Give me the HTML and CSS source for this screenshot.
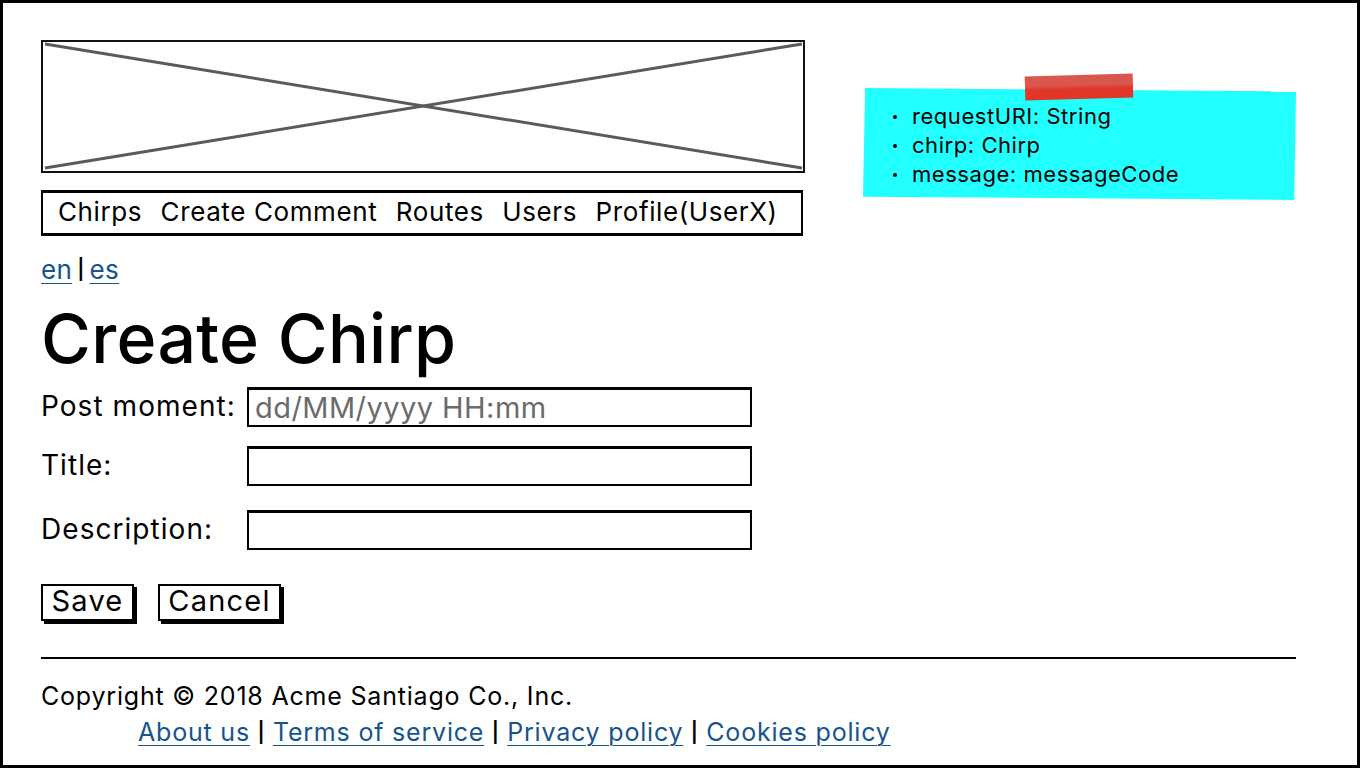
FILE: index.html

```html
<!DOCTYPE html>
<html lang="en">
<head>
  <meta charset="UTF-8" />
  <title>Create Chirp</title>
  <link rel="stylesheet" href="styles.css">
</head>
<body>

<div class="frame">
  <div class="top">
    <div class="header">
      <div class="banner">
        <svg class="banner-x" viewBox="0 0 760 129" preserveAspectRatio="none">
          <line x1="2" y1="2" x2="759" y2="126" />
          <line x1="2" y1="126" x2="759" y2="2" />
        </svg>
      </div>
      <nav class="menu">
        <a>Chirps</a>
        <a>Create Comment</a>
        <a>Routes</a>
        <a>Users</a>
        <a>Profile(UserX)</a>
      </nav>
    </div>
    <div class="note">
      <div class="note-body">
        <ul>
          <li>requestURI: String</li>
          <li>chirp: Chirp</li>
          <li>message: messageCode</li>
        </ul>
      </div>
      <div class="tape"></div>
    </div>
  </div>

  <div class="lang"><a href="#">en</a> <span class="sep">|</span> <a href="#">es</a></div>

  <h1>Create Chirp</h1>

  <form class="chirp-form">
    <div class="row row-first">
      <label>Post moment:</label>
      <input type="text" placeholder="dd/MM/yyyy HH:mm" />
    </div>
    <div class="row row-title">
      <label>Title:</label>
      <input type="text" />
    </div>
    <div class="row row-desc">
      <label>Description:</label>
      <input type="text" />
    </div>
    <div class="buttons">
      <button type="button" class="btn btn-save">Save</button>
      <button type="button" class="btn btn-cancel">Cancel</button>
    </div>
  </form>

  <hr class="rule" />

  <footer class="footer">
    <div class="copy">Copyright © 2018 Acme Santiago Co., Inc.</div>
    <div class="links">
      <a href="#">About us</a> <span class="sep">|</span>
      <a href="#">Terms of service</a> <span class="sep">|</span>
      <a href="#">Privacy policy</a> <span class="sep">|</span>
      <a href="#">Cookies policy</a>
    </div>
  </footer>
</div>

</body>
</html>
```

FILE: styles.css

```css
html, body { margin: 0; padding: 0; background: #fff; }
body { font-family: "Inter", "Lato", sans-serif; color: #000; }
a { color: #15548f; text-underline-offset: 4px; text-decoration-thickness: 1px; }
.sep { font-size: 20px; font-weight: 600; color: #000; }

.frame { box-sizing: border-box; width: 1360px; height: 768px; border: 3px solid #000; padding: 37px 61px 0 38px; overflow: hidden; }

.top { display: flex; }
.header { width: 764px; flex: none; }
.banner { box-sizing: border-box; height: 133px; border: 2px solid #111; }
.banner-x { display: block; width: 100%; height: 100%; }
.banner-x line { stroke: #5a5a5a; stroke-width: 3; vector-effect: non-scaling-stroke; }

.menu { box-sizing: border-box; display: flex; gap: 18.5px; align-items: center; width: 762px; height: 46px; margin-top: 17px; padding: 0 0 3px 15px; border: 3px solid #000; border-width: 3px 2px; font-size: 26px; letter-spacing: 0.6px; }
.menu a { color: #000; white-space: nowrap; }

.note { position: relative; width: 433px; height: 112px; margin: 48px 0 0 58px; }
.note-body { box-sizing: border-box; height: 100%; padding: 14px 0 0 30px; background: #21ffff; clip-path: polygon(0.5% 0, 100% 3%, 99.6% 100%, 0 97%); }
.note-body ul { margin: 0; padding: 0; list-style: none; font-size: 22px; line-height: 29px; letter-spacing: 0.55px; }
.note-body li { display: flex; align-items: center; gap: 15px; }
.note-body li::before { content: ""; width: 4px; height: 4px; border-radius: 50%; background: #000; }
.tape { position: absolute; left: 162px; top: -13px; width: 108px; height: 24px; background: linear-gradient(#d9574c 0 40%, #e03527 60%); transform: rotate(-1.5deg); }

.lang { display: flex; align-items: center; gap: 5px; height: 34px; margin-top: 16px; font-size: 26px; letter-spacing: 0.3px; }

h1 { margin: 7px 0 0; font-size: 68px; font-weight: 500; line-height: 90px; letter-spacing: 0.3px; }

.row { display: flex; align-items: center; height: 40px; }
.row label { width: 206px; flex: none; margin-top: -2px; font-size: 28px; letter-spacing: 1.05px; white-space: nowrap; }
.row input { box-sizing: border-box; width: 505px; height: 40px; margin: 0; padding: 0 6px; border: 2px solid #000; border-top-width: 3px; border-radius: 0; outline: none; font-family: inherit; font-size: 29px; letter-spacing: 0.45px; background: #fff; }
.row input::placeholder { color: #6b6b6b; opacity: 1; }
.row-first { margin-top: 4px; }
.row-title { margin-top: 19px; }
.row-desc { margin-top: 24px; }

.buttons { display: flex; gap: 24px; margin-top: 34px; }
.btn { box-sizing: border-box; height: 37px; padding: 0 0 3px; border: 2px solid #000; border-radius: 0; background: #fff; box-shadow: 3px 3px 0 #000; font-family: inherit; font-size: 29px; letter-spacing: 1.2px; line-height: 30px; color: #000; }
.btn-save { width: 93px; }
.btn-cancel { width: 123px; }

.rule { height: 2px; margin: 36px 0 0; border: 0; background: #000; }

.footer { font-size: 25px; letter-spacing: 0.8px; }
.copy { margin-top: 21px; line-height: 32px; }
.links { display: flex; align-items: center; gap: 7.5px; margin: 4px 0 0 97px; line-height: 32px; }
```
